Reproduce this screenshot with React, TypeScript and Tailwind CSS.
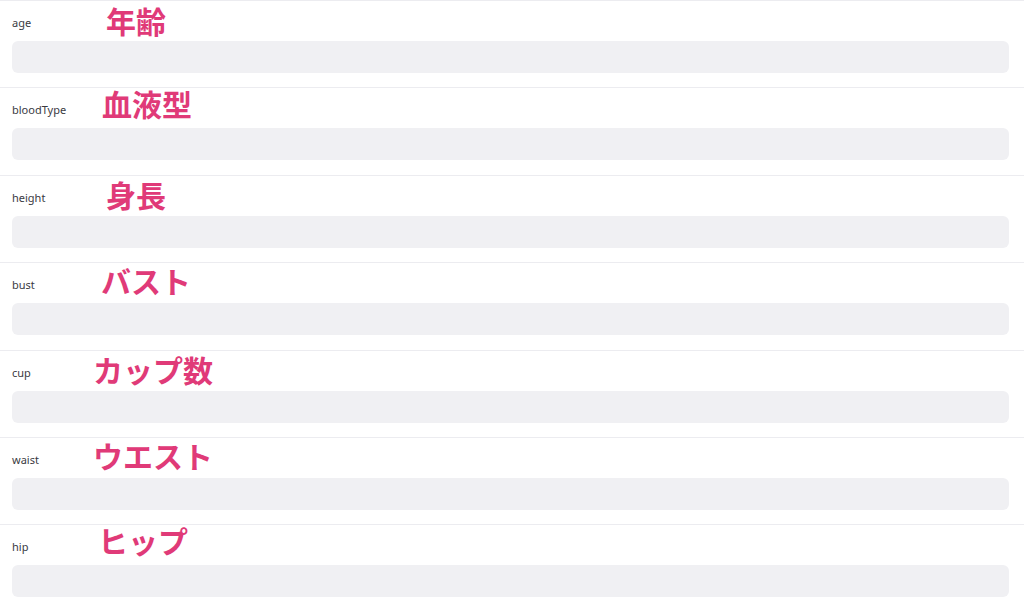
const fields = [
  { key: 'age', note: '年齢', left: 106, top: 3 },
  { key: 'bloodType', note: '血液型', left: 102, top: -1 },
  { key: 'height', note: '身長', left: 106, top: 2 },
  { key: 'bust', note: 'バスト', left: 101, top: 1 },
  { key: 'cup', note: 'カップ数', left: 93, top: 2 },
  { key: 'waist', note: 'ウエスト', left: 93, top: 1 },
  { key: 'hip', note: 'ヒップ', left: 98, top: -1 },
];

export default function App() {
  return (
    <div className="w-[1024px] h-[609px] overflow-hidden bg-white" style={{ fontFamily: '"Noto Sans", sans-serif' }}>
      {fields.map((f) => (
        <div key={f.key} className="relative h-[87.4px] border-t border-[#ececf0] px-3 pt-[14px]">
          <div className="text-[11px] leading-4 text-[#3a3a3f]">{f.key}</div>
          <div className="mt-[10px] h-8 w-[997px] rounded-md bg-[#f0f0f3]" />
          <span
            className="absolute z-10 text-[30px] leading-10 font-bold text-[#e03a78]"
            style={{ left: f.left, top: f.top - 4, fontFamily: '"Noto Sans CJK JP", sans-serif' }}
          >
            {f.note}
          </span>
        </div>
      ))}
    </div>
  );
}
